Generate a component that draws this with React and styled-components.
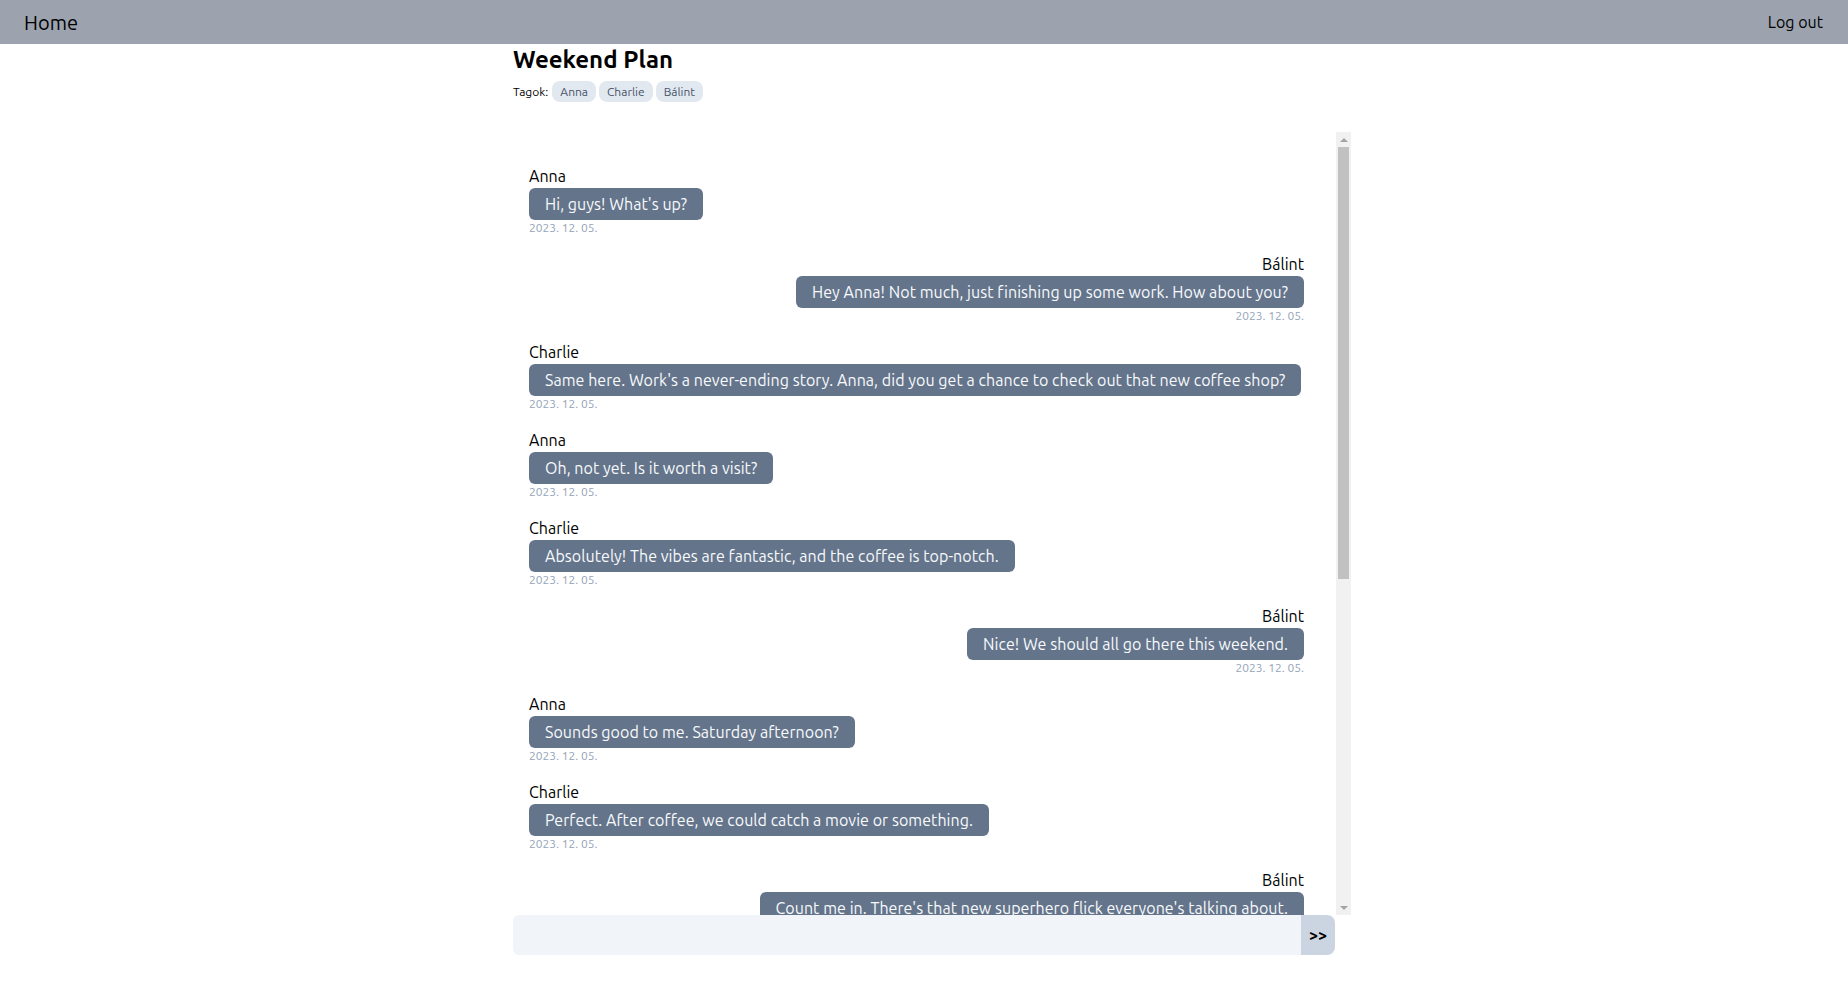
import React, { useLayoutEffect, useRef, useState } from 'react';
import styled, { createGlobalStyle } from 'styled-components';

const GlobalStyle = createGlobalStyle`
  body {
    margin: 0;
    font-family: Ubuntu, "Liberation Sans", sans-serif;
    color: #000;
    background: #fff;
  }
  * { box-sizing: border-box; }
`;

const ME = 'Bálint';

const messages = [
  { author: 'Anna', text: "Hi, guys! What's up?", date: '2023. 12. 05.' },
  { author: 'Bálint', text: 'Hey Anna! Not much, just finishing up some work. How about you?', date: '2023. 12. 05.' },
  { author: 'Charlie', text: "Same here. Work's a never-ending story. Anna, did you get a chance to check out that new coffee shop?", date: '2023. 12. 05.' },
  { author: 'Anna', text: 'Oh, not yet. Is it worth a visit?', date: '2023. 12. 05.' },
  { author: 'Charlie', text: 'Absolutely! The vibes are fantastic, and the coffee is top-notch.', date: '2023. 12. 05.' },
  { author: 'Bálint', text: 'Nice! We should all go there this weekend.', date: '2023. 12. 05.' },
  { author: 'Anna', text: 'Sounds good to me. Saturday afternoon?', date: '2023. 12. 05.' },
  { author: 'Charlie', text: 'Perfect. After coffee, we could catch a movie or something.', date: '2023. 12. 05.' },
  { author: 'Bálint', text: "Count me in. There's that new superhero flick everyone's talking about.", date: '2023. 12. 05.' },
  { author: 'Anna', text: "Oh, I've heard about that one! Let's do it.", date: '2023. 12. 05.' },
  { author: 'Charlie', text: "Great, I'll check the showtimes.", date: '2023. 12. 05.' },
  { author: 'Bálint', text: 'Should we grab dinner after the movie too?', date: '2023. 12. 05.' },
  { author: 'Anna', text: 'Yes! How about that Italian place downtown?', date: '2023. 12. 05.' },
  { author: 'Charlie', text: 'Sounds like a plan. See you all on Saturday!', date: '2023. 12. 05.' },
  { author: 'Bálint', text: "Can't wait!", date: '2023. 12. 05.' },
];

const members = ['Anna', 'Charlie', 'Bálint'];

const Navbar = styled.nav`
  height: 44px;
  background: #9ca3af;
  display: flex;
  align-items: center;
  justify-content: space-between;
  padding: 0 25px 0 24px;
`;

const NavLink = styled.a`
  color: #000;
  text-decoration: none;
  font-size: ${(p) => (p.$big ? '20px' : '16px')};
  cursor: pointer;
`;

const Main = styled.main`
  width: 822px;
  margin: 0 auto;
`;

const Title = styled.h1`
  margin: 0;
  font-size: 24px;
  line-height: 32px;
  font-weight: 700;
`;

const Members = styled.div`
  display: flex;
  align-items: center;
  gap: 3px;
  margin-top: 5px;
  font-size: 12px;
`;

const MembersLabel = styled.span`
  margin-right: 1px;
`;

const Chip = styled.span`
  background: #e2e8f0;
  color: #475569;
  border-radius: 8px;
  padding: 2px 8px;
  line-height: 17px;
`;

const ChatFrame = styled.div`
  display: flex;
  width: 838px;
  height: 783px;
  margin-top: 30px;
`;

const ChatBox = styled.div`
  flex: 1;
  overflow-y: auto;
  scrollbar-width: none;
  &::-webkit-scrollbar { display: none; }
`;

const Rail = styled.div`
  width: 15px;
  background: #f1f1f1;
  display: flex;
  flex-direction: column;
`;

const RailButton = styled.div`
  height: 15px;
  display: flex;
  align-items: center;
  justify-content: center;
  cursor: pointer;

  &::before {
    content: '';
    width: 0;
    height: 0;
    border-left: 4px solid transparent;
    border-right: 4px solid transparent;
    ${(p) => (p.$down ? 'border-top' : 'border-bottom')}: 4px solid #a3a3a3;
  }
`;

const Track = styled.div`
  flex: 1;
  position: relative;
`;

const Thumb = styled.div`
  position: absolute;
  left: 2px;
  right: 2px;
  background: #c1c1c1;
`;

const MessageList = styled.div`
  display: flex;
  flex-direction: column;
  gap: 16px;
  padding: 32px 32px 28px 16px;
`;

const Message = styled.div`
  display: flex;
  flex-direction: column;
  align-items: ${(p) => (p.$own ? 'flex-end' : 'flex-start')};
`;

const Author = styled.div`
  font-size: 16px;
  line-height: 24px;
`;

const Bubble = styled.div`
  background: #64748b;
  color: #f8fafc;
  font-size: 16px;
  line-height: 24px;
  letter-spacing: 0.05px;
  padding: 4px 16px;
  border-radius: 6px;
`;

const Stamp = styled.div`
  font-size: 12px;
  line-height: 16px;
  color: #94a3b8;
`;

const Composer = styled.form`
  display: flex;
  height: 40px;
  width: 822px;
`;

const Input = styled.input`
  flex: 1;
  border: none;
  outline: none;
  background: #f1f5f9;
  border-radius: 6px 0 0 6px;
  padding: 0 12px;
  font-family: inherit;
  font-size: 16px;
`;

const SendButton = styled.button`
  width: 34px;
  border: none;
  background: #cbd5e1;
  border-radius: 0 8px 8px 0;
  font-family: inherit;
  font-weight: 700;
  font-size: 16px;
  color: #000;
  cursor: pointer;
  padding: 0;
`;

export default function App() {
  const [text, setText] = useState('');
  const [thumb, setThumb] = useState({ top: 0, height: 0 });
  const boxRef = useRef(null);
  const trackRef = useRef(null);

  function measure() {
    const box = boxRef.current;
    const track = trackRef.current;
    if (!box || !track) return;
    const trackH = track.clientHeight;
    const ratio = box.clientHeight / box.scrollHeight;
    const height = Math.max(20, trackH * ratio);
    const maxScroll = box.scrollHeight - box.clientHeight;
    const top = maxScroll > 0 ? (box.scrollTop / maxScroll) * (trackH - height) : 0;
    setThumb({ top, height });
  }

  useLayoutEffect(() => {
    measure();
  }, []);

  function scrollBy(delta) {
    boxRef.current.scrollTop += delta;
  }

  function handleSubmit(e) {
    e.preventDefault();
    setText('');
  }

  return (
    <>
      <GlobalStyle />
      <Navbar>
        <NavLink $big>Home</NavLink>
        <NavLink>Log out</NavLink>
      </Navbar>
      <Main>
        <Title>Weekend Plan</Title>
        <Members>
          <MembersLabel>Tagok:</MembersLabel>
          {members.map((m) => (
            <Chip key={m}>{m}</Chip>
          ))}
        </Members>
        <ChatFrame>
          <ChatBox ref={boxRef} onScroll={measure}>
            <MessageList>
              {messages.map((msg, i) => (
                <Message key={i} $own={msg.author === ME}>
                  <Author>{msg.author}</Author>
                  <Bubble>{msg.text}</Bubble>
                  <Stamp>{msg.date}</Stamp>
                </Message>
              ))}
            </MessageList>
          </ChatBox>
          <Rail>
            <RailButton onClick={() => scrollBy(-40)} />
            <Track ref={trackRef}>
              <Thumb style={{ top: thumb.top, height: thumb.height }} />
            </Track>
            <RailButton $down onClick={() => scrollBy(40)} />
          </Rail>
        </ChatFrame>
        <Composer onSubmit={handleSubmit}>
          <Input value={text} onChange={(e) => setText(e.target.value)} />
          <SendButton type="submit">&gt;&gt;</SendButton>
        </Composer>
      </Main>
    </>
  );
}
